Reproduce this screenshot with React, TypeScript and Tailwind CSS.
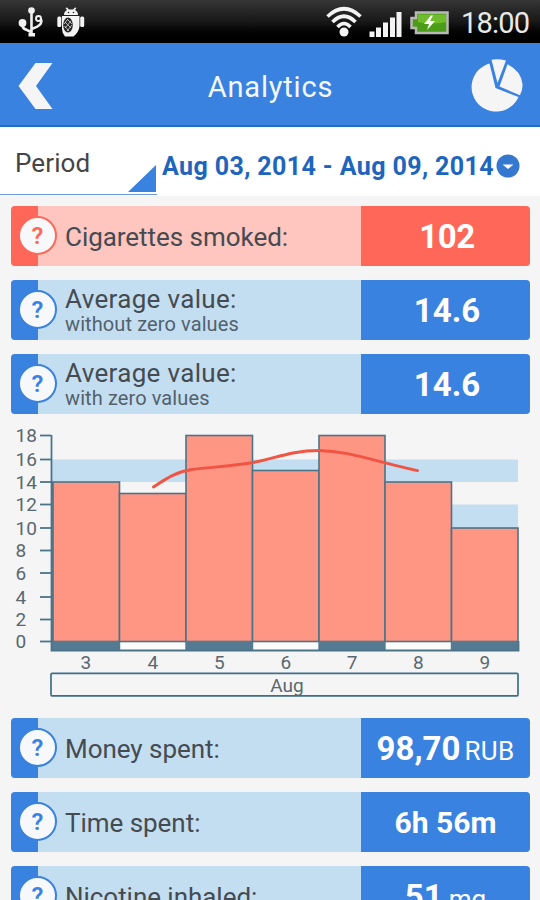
import React from "react";

type Tone = "blue" | "red";

const tones = {
  blue: { strong: "bg-[#3a82df]", soft: "bg-[#c3def1]", text: "text-[#3a82df]", edge: "border-[#3a82df]" },
  red: { strong: "bg-[#ff6859]", soft: "bg-[#ffc5bf]", text: "text-[#ff6859]", edge: "border-[#ff6859]" },
};

function StatRow({ label, sub, tone = "blue", children }: {
  label: string;
  sub?: string;
  tone?: Tone;
  children: React.ReactNode;
}) {
  const t = tones[tone];
  return (
    <div className={`flex h-[60px] w-[519px] shrink-0 overflow-hidden rounded-[4px] ${t.soft}`}>
      <div className={`flex w-[27px] shrink-0 items-center ${t.strong}`}>
        <div className={`relative mb-px ml-[7px] flex size-[39px] shrink-0 items-center justify-center rounded-full border-2 bg-[#f7f8fa] pt-px text-[24px] font-semibold ${t.text} ${t.edge}`}>?</div>
      </div>
      <div className="flex w-[323px] shrink-0 flex-col justify-center pl-[27px] whitespace-nowrap text-[#454b50]">
        <span className={`text-[26px] ${sub ? "pt-[2px] leading-[26px] tracking-[0.33px]" : "pt-[2px] leading-[30px] tracking-[-0.04px]"}`}>{label}</span>
        {sub && <span className="text-[20px] leading-[24px] tracking-[0.1px] text-[#53616b]">{sub}</span>}
      </div>
      <div className={`flex flex-1 items-center justify-center whitespace-nowrap text-white ${t.strong}`}>{children}</div>
    </div>
  );
}

function UsbIcon() {
  return (
    <svg className="h-[32px] w-[26px]" viewBox="0 0 26 32" fill="none" stroke="#f1f1f1" strokeWidth="2.6">
      <path d="M13.500 4V29M4.500 17V20Q5 23 9 24L13 26M22 13Q24.500 14 22.500 18Q20 21 13.500 23" />
      <circle cx="13.500" cy="4.500" r="3.300" fill="#f1f1f1" stroke="none" />
      <circle cx="4.500" cy="17" r="3.900" fill="#f1f1f1" stroke="none" />
      <circle cx="20.500" cy="12.500" r="2.500" strokeWidth="1.900" />
      <path d="M10.500 27H17V30.500H10.500Z" fill="#f1f1f1" stroke="none" />
    </svg>
  );
}

function DebugIcon() {
  return (
    <svg className="h-[32px] w-[28px]" viewBox="0 0 28 32" fill="#f3f3f3">
      <path d="M7 9Q7 5.500 10 4L8.500 2L10 1.500L12 3.500H16L18 1.500L19.500 2L18 4Q21 5.500 21 9Z" />
      <path d="M5 10H22.500V20Q22 26 16.500 30.500H8Q5 27 5 23Z" />
      <rect x=".3" y="10.500" width="4" height="10.500" rx="1.500" />
      <rect x="23.200" y="10.500" width="4" height="10.500" rx="1.500" />
      <ellipse cx="11" cy="19" rx="4.800" ry="7.500" fill="#242424" />
      <path d="M8 16L14 22M7.500 20L12 25M10 13L15 18M14 15L8 22M11 13L7 18M15 19L10 25" stroke="#ddd" strokeWidth=".8" />
      <circle cx="11.500" cy="6.500" r=".8" fill="#222" />
      <circle cx="16.500" cy="6.500" r=".8" fill="#222" />
    </svg>
  );
}

function StatusBar() {
  return (
    <header className="flex h-[43px] shrink-0 items-center bg-linear-to-b from-[#363636] via-[#181818] to-black pl-[18px]">
      <UsbIcon />
      <div className="ml-[13px] flex"><DebugIcon /></div>
      <svg className="ml-[240px] h-[32px] w-[38px]" viewBox="0 0 38 32" fill="none" stroke="#f3f3f3" strokeWidth="3.6">
        <path d="M2.500 10.500Q19-5 35.500 10.500M7.500 16Q19 4.500 30.500 16M12.500 21Q19 14 25.500 21" />
        <circle cx="19" cy="26" r="4.500" fill="#f3f3f3" stroke="none" />
      </svg>
      <svg className="mt-[4px] ml-[6px] h-[28px] w-[34px]" viewBox="0 0 34 28" fill="#f3f3f3">
        <path d="M.5 21.500h5v5.500h-5zM7 17.500h5V27H7zM14 12.500h5V27h-5zM21 7.500h5V27h-5zM27.500 2h5v25h-5z" />
      </svg>
      <svg className="mt-[3px] ml-[7px] h-[26px] w-[40px]" viewBox="0 0 40 26">
        <path d="M6 2.500H37.500V23H6V18H1.500V8H6Z" fill="#4c9c17" stroke="#b9b9b9" strokeWidth="2.500" />
        <path d="M8 4.500H36V12Q22 15 8 12Z" fill="#6fbd2c" />
        <path d="M21 5.500L14 14H19L17 20L25 11H20L23 5.500Z" fill="white" />
      </svg>
      <span className="ml-[11px] pt-[2px] text-[29px] leading-[34px] tracking-[-0.8px] text-[#e9e9e9]">18:00</span>
    </header>
  );
}

const bars = [
  { day: "3", x: 52, w: 67.5, y: 482 },
  { day: "4", x: 119.5, w: 66.5, y: 493.500 },
  { day: "5", x: 186, w: 66.5, y: 435.500 },
  { day: "6", x: 252.5, w: 66.5, y: 470.500 },
  { day: "7", x: 319, w: 66, y: 435.500 },
  { day: "8", x: 385, w: 66.5, y: 482 },
  { day: "9", x: 451.5, w: 66.5, y: 528 },
];
const ticks = [435.5, 459.5, 482, 504.5, 528, 550.5, 573, 597, 619.5, 641.5];

function Chart() {
  return (
    <svg className="h-[304px] w-[540px] shrink-0" viewBox="0 414 540 304" fontSize="19" fill="#596870">
      <path d="M51 459.500H518V482H51ZM51 504.500H518V528H51Z" fill="#c3def1" />
      <path d="M52 642H518V650H52Z" fill="#fafbfb" />
      {bars.map((b, i) => (
        <g key={b.day}>
          <rect x={b.x} y={b.y} width={b.w} height={641.5 - b.y} fill="#ff9684" stroke="#4c7488" strokeWidth="1.600" />
          {i % 2 === 0 && <rect x={b.x - 0.7} y="641" width={b.w + 1.4} height="9" fill="#547b91" />}
          <text x={b.x + b.w / 2} y="669" textAnchor="middle">{b.day}</text>
        </g>
      ))}
      <path d="M51.500 435V650.500H518.500V641" fill="none" stroke="#4c7488" strokeWidth="1.800" />
      <path d="M52.700 482V642" stroke="#4c7488" strokeWidth="2.200" />
      {ticks.map((y, i) => (
        <g key={y}>
          <path d={`M40 ${y}H51`} stroke="#4c7488" strokeWidth="1.800" />
          <text x="15.500" y={Math.floor(y + 7)}>{18 - i * 2}</text>
        </g>
      ))}
      <rect x="51" y="673.300" width="467" height="22.500" rx="1" fill="none" stroke="#3f6f87" strokeWidth="1.700" />
      <text x="287" y="692" textAnchor="middle">Aug</text>
      <path d="M153.500 487C167 478 177 471.500 192 469.500C210 467 230 466.500 253 462.500C275 458.500 291 450.500 319 450.500C348 451 370 460 417.500 470.700" fill="none" stroke="#f15443" strokeWidth="2.900" strokeLinecap="round" />
    </svg>
  );
}

export default function App() {
  return (
    <div className="flex h-[900px] w-[540px] flex-col overflow-hidden bg-[#f5f5f5] font-[Roboto,sans-serif]">
      <StatusBar />
      <nav className="flex h-[84px] shrink-0 items-center justify-between border-b-2 border-[#1b70cf] bg-[#3a82df] pr-[16px] pl-[18px]">
        <svg className="mt-[3px] h-[48px] w-[36px]" viewBox="0 0 36 48"><path d="M17.500 1H34.500L18 24L34.500 47H17.500L.5 24Z" fill="#f5f5f5" /></svg>
        <h1 className="ml-[16px] pt-[5px] text-[29px] leading-[34px] tracking-[0.8px] text-[#f4f7fb]">Analytics</h1>
        <svg className="mt-[2px] h-[56px] w-[53px]" viewBox="0 0 53 56" fill="#f5f5f5">
          <path d="M18.500 6.500L24.500 31L47.500 40A24.500 24.500 0 1 1 18.500 6.500Z" />
          <path d="M20.500 2.800Q27 1.500 35 3.500L26.500 26Z" />
          <path d="M36.500 7.300Q50 14 51.500 27Q51.800 33 49 38.300L28.500 29.500Z" />
        </svg>
      </nav>
      <section className="flex h-[69px] shrink-0 bg-white">
        <div className="flex h-[68px] w-[157px] shrink-0 items-end justify-between border-b border-[#6b9bdc] pr-px pb-[2px] pl-[15px]">
          <span className="pb-[13px] text-[26px] leading-[32px] tracking-[0.1px] text-[#454545]">Period</span>
          <svg className="h-[27px] w-[28px]" viewBox="0 0 28 27"><path d="M28 0V27H0Z" fill="#3a82df" /></svg>
        </div>
        <span className="mt-[24px] ml-[5px] shrink-0 text-[25px] leading-[32px] font-bold tracking-[0.39px] whitespace-nowrap text-[#1d65bd]">Aug 03, 2014 - Aug 09, 2014</span>
        <svg className="mt-[27px] ml-[2px] size-[24px] shrink-0" viewBox="0 0 24 24"><circle cx="12" cy="12" r="11.500" fill="#3478cf" /><path d="M6.500 10.500H17.500L12 15Z" fill="white" /></svg>
      </section>
      <main className="flex flex-col pt-[10px]">
        <div className="flex flex-col gap-[14px] pl-[11px]">
          <StatRow label="Cigarettes smoked:" tone="red"><b className="pt-[2px] pl-[3px] text-[33px] tracking-[-0.4px]">102</b></StatRow>
          <StatRow label="Average value:" sub="without zero values"><b className="pt-[2px] pl-[3px] text-[33px]">14.6</b></StatRow>
          <StatRow label="Average value:" sub="with zero values"><b className="pt-[2px] pl-[3px] text-[33px]">14.6</b></StatRow>
        </div>
        <Chart />
        <div className="flex flex-col gap-[14px] pl-[11px]">
          <StatRow label="Money spent:"><span className="flex items-baseline gap-[4px] pt-[2px]"><b className="text-[33px]">98,70</b><span className="text-[26px] tracking-[0.3px]">RUB</span></span></StatRow>
          <StatRow label="Time spent:"><b className="text-[30px]">6h 56m</b></StatRow>
          <StatRow label="Nicotine inhaled:"><span className="flex items-baseline gap-[6px] pt-[2px]"><b className="text-[33px]">51</b><span className="text-[26px]">mg</span></span></StatRow>
        </div>
      </main>
    </div>
  );
}
